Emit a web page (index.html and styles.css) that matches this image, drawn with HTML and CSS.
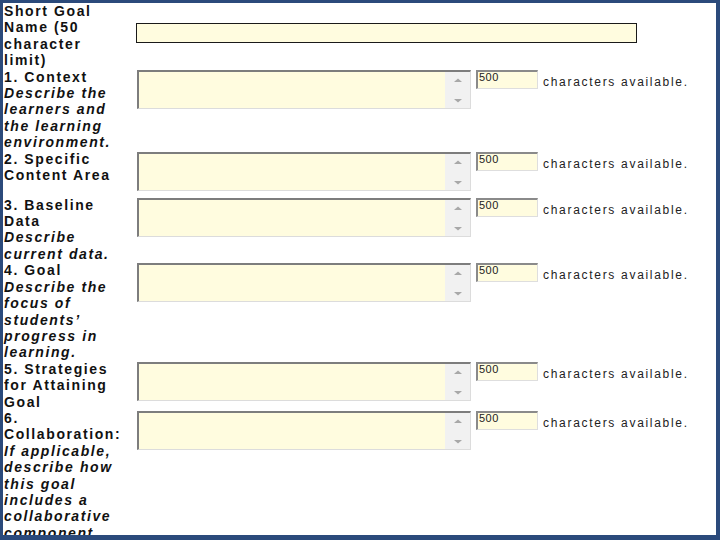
FILE: index.html
```html
<!DOCTYPE html>
<html>
<head>
<meta charset="utf-8">
<link rel="stylesheet" href="styles.css">
</head>
<body>
<div class="frame">
  <div class="form">
    <div class="label">Short Goal Name (50 character limit)</div>
    <div class="field center"><input class="short" type="text"></div>

    <div class="label">1. Context<br><em>Describe the learners and the learning environment.</em></div>
    <div class="field">
      <div class="ta"><textarea></textarea><div class="sb"><svg width="10" height="30" viewBox="0 0 10 30"><path d="M1 7 L5 3.5 L9 7 Z" fill="#a8a8a8"/><path d="M1 24 L5 27.5 L9 24 Z" fill="#a8a8a8"/></svg></div></div>
      <div class="count">500</div>
      <span class="avail">characters available.</span>
    </div>

    <div class="label">2. Specific Content Area</div>
    <div class="field tall">
      <div class="ta"><textarea></textarea><div class="sb"><svg width="10" height="30" viewBox="0 0 10 30"><path d="M1 7 L5 3.5 L9 7 Z" fill="#a8a8a8"/><path d="M1 24 L5 27.5 L9 24 Z" fill="#a8a8a8"/></svg></div></div>
      <div class="count">500</div>
      <span class="avail">characters available.</span>
    </div>

    <div class="label">3. Baseline Data<br><em>Describe current data.</em></div>
    <div class="field">
      <div class="ta"><textarea></textarea><div class="sb"><svg width="10" height="30" viewBox="0 0 10 30"><path d="M1 7 L5 3.5 L9 7 Z" fill="#a8a8a8"/><path d="M1 24 L5 27.5 L9 24 Z" fill="#a8a8a8"/></svg></div></div>
      <div class="count">500</div>
      <span class="avail">characters available.</span>
    </div>

    <div class="label">4. Goal<br><em>Describe the focus of students’ progress in learning.</em></div>
    <div class="field">
      <div class="ta"><textarea></textarea><div class="sb"><svg width="10" height="30" viewBox="0 0 10 30"><path d="M1 7 L5 3.5 L9 7 Z" fill="#a8a8a8"/><path d="M1 24 L5 27.5 L9 24 Z" fill="#a8a8a8"/></svg></div></div>
      <div class="count">500</div>
      <span class="avail">characters available.</span>
    </div>

    <div class="label">5. Strategies for Attaining Goal</div>
    <div class="field">
      <div class="ta"><textarea></textarea><div class="sb"><svg width="10" height="30" viewBox="0 0 10 30"><path d="M1 7 L5 3.5 L9 7 Z" fill="#a8a8a8"/><path d="M1 24 L5 27.5 L9 24 Z" fill="#a8a8a8"/></svg></div></div>
      <div class="count">500</div>
      <span class="avail">characters available.</span>
    </div>

    <div class="label">6. Collaboration:<br><em>If applicable, describe how this goal includes a collaborative component.</em></div>
    <div class="field">
      <div class="ta"><textarea></textarea><div class="sb"><svg width="10" height="30" viewBox="0 0 10 30"><path d="M1 7 L5 3.5 L9 7 Z" fill="#a8a8a8"/><path d="M1 24 L5 27.5 L9 24 Z" fill="#a8a8a8"/></svg></div></div>
      <div class="count">500</div>
      <span class="avail">characters available.</span>
    </div>
  </div>
</div>
</body>
</html>
```
FILE: styles.css
```css
html, body {
  margin: 0;
  padding: 0;
  background: #ffffff;
}
.frame {
  width: 720px;
  height: 540px;
  box-sizing: border-box;
  border-style: solid;
  border-color: #2b4a7b;
  border-width: 3px 4px 5px 3px;
  overflow: hidden;
  background: #ffffff;
}
.form {
  display: grid;
  grid-template-columns: 132px 1fr;
  padding-left: 1px;
  font-family: "Liberation Sans", Arial, sans-serif;
  color: #111111;
}
.label {
  width: 124px;
  font-weight: bold;
  font-size: 14px;
  line-height: 16.4px;
  letter-spacing: 1.6px;
}
.label em {
  font-style: italic;
}
.field {
  display: flex;
  align-items: flex-start;
  padding-top: 1px;
}
.field.center {
  align-items: center;
  padding-top: 0;
  padding-bottom: 5px;
}
.field.tall {
  padding-bottom: 6px;
}
.short {
  width: 501px;
  height: 20px;
  box-sizing: border-box;
  margin: 0;
  border: 1.5px solid #1a1a1a;
  background: #fffcdf;
  outline: none;
  padding: 0;
}
.ta {
  display: flex;
  width: 334px;
  height: 39px;
  box-sizing: border-box;
  margin-left: 1px;
  border-style: solid;
  border-width: 2px 1px 1px 2px;
  border-color: #7d7d7d #dcdcdc #dcdcdc #7d7d7d;
  background: #fffcdf;
}
.ta textarea {
  flex: 1;
  border: none;
  margin: 0;
  padding: 0;
  resize: none;
  background: #fffcdf;
  outline: none;
}
.sb {
  width: 25px;
  background: #f1f1f1;
  display: flex;
  justify-content: center;
  align-items: center;
}
.sb svg {
  display: block;
}
.count {
  margin-left: 5px;
  width: 62px;
  height: 19px;
  box-sizing: border-box;
  border-style: solid;
  border-width: 2px 1px 1px 2px;
  border-color: #8a8a8a #dedede #dedede #8a8a8a;
  background: #fffcdf;
  font-size: 11px;
  line-height: 11px;
  padding-left: 1px;
  letter-spacing: 0.5px;
  color: #222;
}
.avail {
  margin-left: 5px;
  margin-top: 5px;
  font-size: 12px;
  line-height: 14px;
  letter-spacing: 1.7px;
  color: #222;
}
```
